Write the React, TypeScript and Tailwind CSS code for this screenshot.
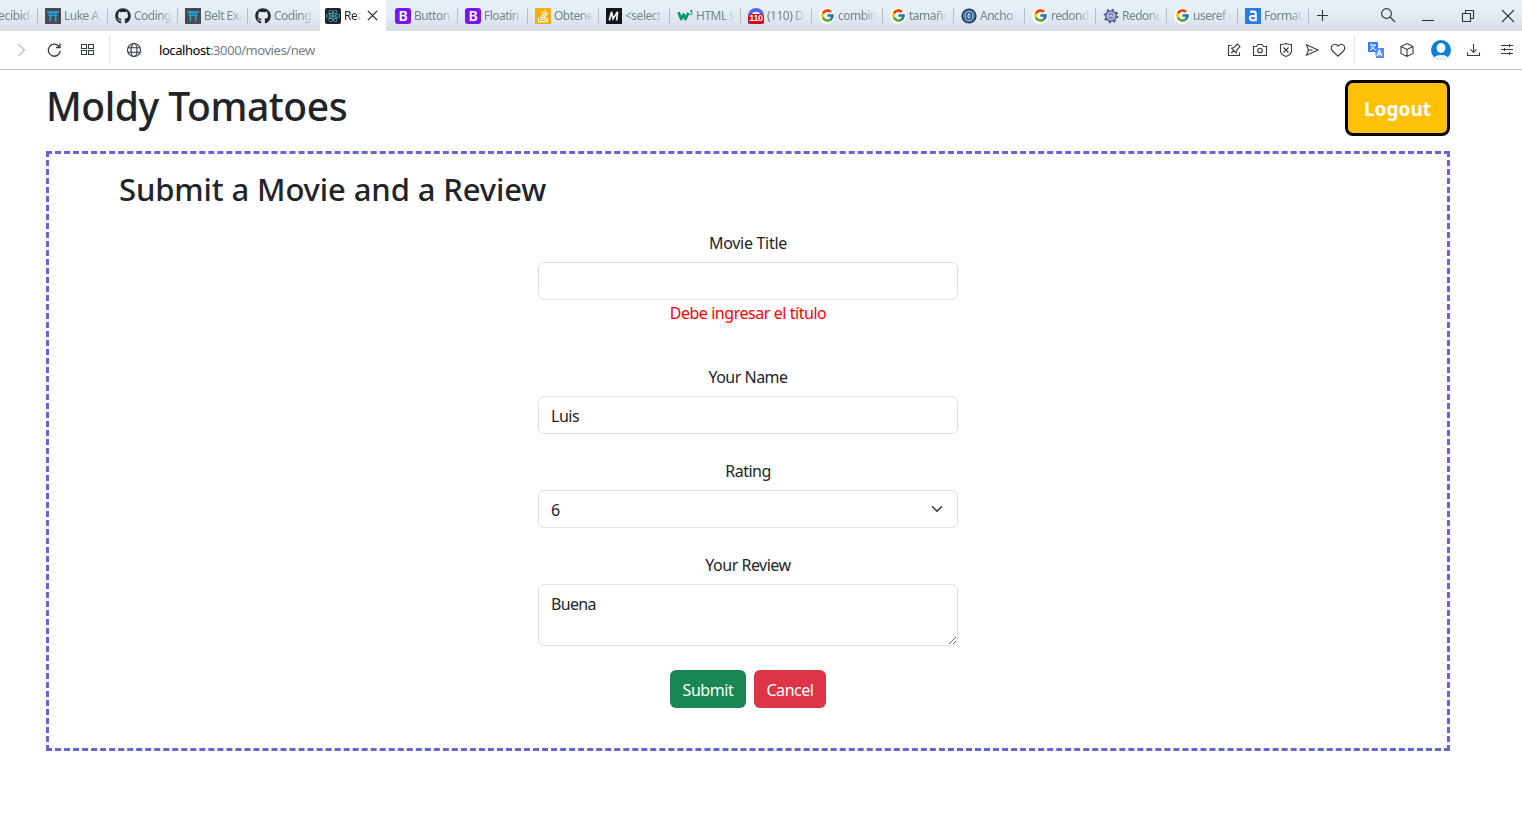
import React from "react";
import { FaGithub, FaReact, FaStackOverflow } from "react-icons/fa";
import { FcGoogle } from "react-icons/fc";

function Stroke({ children, className = "size-4", width = 1.1 }: { children: React.ReactNode; className?: string; width?: number }) {
  return (
    <svg viewBox="0 0 16 16" fill="none" stroke="currentColor" strokeWidth={width} className={`shrink-0 ${className}`}>
      {children}
    </svg>
  );
}

const torii = (
  <svg viewBox="0 0 16 16" className="size-4" fill="none" stroke="#1fa5dc">
    <path d="M0 0h16v16H0z" fill="#4a4a4c" stroke="none" />
    <path d="M2 3.800q6 .6 12 0" strokeWidth="1.800" />
    <path d="M3.500 7.500h9" strokeWidth="1.300" />
    <path d="M5.300 4v9.500M10.700 4v9.500" strokeWidth="1.700" />
    <path d="M8 4v3.500" strokeWidth="1.200" />
  </svg>
);
const github = <FaGithub className="size-4 text-[#24292f]" />;
const bootstrap = (
  <span className="flex size-4 items-center justify-center rounded-[3px] bg-[#7a12f8] text-[14px] leading-none font-semibold text-white">B</span>
);
const google = (
  <span className="flex size-4 items-center justify-center rounded-full bg-white">
    <FcGoogle className="size-[15px]" />
  </span>
);
const stack = (
  <span className="flex size-4 items-center justify-center bg-[#efb010]">
    <FaStackOverflow className="size-3.5 text-white" />
  </span>
);
const medium = (
  <svg viewBox="0 0 16 16" className="size-4" fill="none" stroke="#f4f4f4">
    <path d="M0 0h16v16H0z" fill="#15141a" stroke="none" />
    <path d="M3.300 12.500L5.600 3.800L7 10.800L11.600 3.800L10.600 12.500" strokeWidth="1.700" />
  </svg>
);
const w3 = (
  <svg viewBox="0 0 16 16" className="size-4" fill="none" stroke="#059862">
    <path d="M1.500 4.200L4.300 11L6.600 6.500L8.500 11L11.500 4.800" strokeWidth="2.700" strokeLinejoin="round" />
    <path d="M13 2.600h2.200l-1.300 1.600q1.500 0 1.400 1.300q-.2 1.400-2.300 1" strokeWidth="1" />
  </svg>
);
const discord = (
  <span className="relative block size-4 overflow-hidden rounded-t-full rounded-b-[5px] bg-[#5865f2]">
    <span className="absolute top-[4px] left-[4px] h-[3px] w-2 rounded-t-full bg-white" />
    <span className="absolute inset-x-0 bottom-0 flex h-[10px] items-center justify-center rounded-[4px] bg-[#d90010] font-['Liberation_Sans'] text-[9px] leading-none font-bold tracking-[-0.3px] text-white">
      110
    </span>
  </span>
);
const anchor = (
  <svg viewBox="0 0 16 16" className="size-4" fill="none">
    <circle cx="8" cy="8" r="7.6" fill="#28323e" />
    <circle cx="8" cy="8" r="6.3" fill="#3d77c5" />
    <ellipse cx="8" cy="8" rx="3.700" ry="4.4" fill="#28466c" stroke="#a9c4e6" strokeWidth="1" />
    <path d="M8 5.3q-1.7 0-1.7 2.7t1.7 2.6q1.6 0 1.6-2.6T8 5.3" fill="#e0e9f4" />
    <ellipse cx="8" cy="8" rx=".6" ry="1.3" fill="#28466c" />
  </svg>
);
const gear = (
  <svg viewBox="0 0 16 16" className="size-4" fill="none">
    <circle cx="8" cy="8" r="6.400" stroke="#4755a0" strokeWidth="2" strokeDasharray="2.010 3.016" />
    <circle cx="8" cy="8" r="5.200" fill="#c8cde0" stroke="#3d4b94" strokeWidth="1.3" />
    <circle cx="8" cy="8" r="3.2" fill="#7c86b6" />
    <path d="M5 7.5l2 1.2L8 7l1.2 1.8 2-1.3" stroke="#dce1f0" strokeWidth=".9" />
  </svg>
);
const letterA = (
  <svg viewBox="0 0 16 16" className="size-4" fill="none">
    <path d="M0 0h16v16H0z" fill="#2a7be4" />
    <path d="M5 3.600h3.700q2 0 2 2v6.600H6.800Q5 12.200 5 10.100 5 8 7 8h3.700" stroke="#fff" strokeWidth="2.100" />
  </svg>
);

type Tab = { icon: React.ReactNode; label: string; box: string };
const W70 = "w-[70px] border-r pl-[7px]";
const W71 = "w-[71px] border-r pl-[7px]";

const before: Tab[] = [
  { icon: torii, label: "Luke A", box: W70 },
  { icon: github, label: "Coding", box: W70 },
  { icon: torii, label: "Belt Exa", box: W70 },
  { icon: github, label: "Coding", box: "w-[72px] pl-[7px]" },
];
const after: Tab[] = [
  { icon: bootstrap, label: "Button", box: "w-[72px] border-r pl-[9px]" },
  { icon: bootstrap, label: "Floatin", box: W70 },
  { icon: stack, label: "Obtene", box: W71 },
  { icon: medium, label: "<select", box: W71 },
  { icon: w3, label: "HTML s", box: W71 },
  { icon: discord, label: "(110) D", box: W71 },
  { icon: google, label: "combin", box: W71 },
  { icon: google, label: "tamaño", box: W71 },
  { icon: anchor, label: "Ancho", box: W71 },
  { icon: google, label: "redond", box: W71 },
  { icon: gear, label: "Redond", box: W71 },
  { icon: google, label: "useref e", box: W71 },
  { icon: letterA, label: "Format", box: W71 },
];

const fade = "[mask-image:linear-gradient(to_right,black_68%,transparent)]";

function TabItem({ icon, label, box }: Tab) {
  return (
    <div className={`flex h-4 shrink-0 items-center border-[#b3c0cb] ${box}`}>
      <span className="size-4 shrink-0">{icon}</span>
      <span className={`ml-[3px] w-[39px] overflow-hidden text-[12px] leading-4 tracking-[-0.5px] whitespace-nowrap ${fade}`}>{label}</span>
    </div>
  );
}

function TabBar() {
  return (
    <div className="flex h-[31px] items-center bg-linear-to-b from-[#e6eef6] from-30% to-[#d8dfe7] text-[#75838f]">
      <div className="flex h-4 w-[38px] shrink-0 items-center border-r border-[#b3c0cb]">
        <span className={`-ml-[2px] w-[34px] overflow-hidden text-[12px] leading-4 tracking-[-0.3px] whitespace-nowrap ${fade}`}>ecibidos</span>
      </div>
      {before.map((t, i) => <TabItem key={i} {...t} />)}
      <div className="flex h-full w-[66px] shrink-0 items-center bg-white pl-[5px] text-[#20262c]">
        <span className="flex size-4 items-center justify-center rounded-[2px] bg-[#20232a]">
          <FaReact className="size-3.5 text-[#55bcd6]" />
        </span>
        <span className={`ml-[3px] w-[17px] overflow-hidden text-[12px] leading-4 tracking-[-0.4px] ${fade}`}>React</span>
        <Stroke className="ml-[4px] size-[15px]" width={1.3}><path d="M3 3l10 10M13 3L3 13" /></Stroke>
      </div>
      {after.map((t, i) => <TabItem key={i} {...t} />)}
      <div className="flex flex-1 items-center text-[#2f363d]">
        <Stroke className="ml-[5px] size-4"><path d="M8.500 2v11M3 7.500h11" /></Stroke>
        <Stroke className="ml-[50px] size-4"><circle cx="6.500" cy="5.500" r="4.900" /><path d="M10 9l5 5" /></Stroke>
        <Stroke className="ml-[24px] size-4"><path d="M2 12.500h12" /></Stroke>
        <Stroke className="ml-[24px] size-4"><path d="M2.500 5.500h8v8h-8zM5.500 5.500v-3h8v8h-3" /></Stroke>
        <Stroke className="ml-[24px] size-4"><path d="M2 2l12 12M14 2L2 14" /></Stroke>
      </div>
    </div>
  );
}

function AddressBar() {
  return (
    <div className="flex h-[39px] items-center border-b border-[#b5bfc8] bg-white text-[#343c44]">
      <Stroke className="ml-[13px] size-4 text-[#b8bcc0]"><path d="M5.500 2l6 6-6 6" /></Stroke>
      <Stroke className="ml-[17px] size-4" width={1.3}><path d="M13.300 4.800A6 6 0 1 0 14.300 9M14 1.500v4H10" /></Stroke>
      <Stroke className="ml-[18px] size-4"><path d="M1.500 2.500h5v4h-5zM8.500 2.500h5v4h-5zM1.500 8.500h5v4h-5zM8.500 8.500h5v4h-5z" /></Stroke>
      <div className="ml-[13px] h-7 w-px bg-[#dfe3e7]" />
      <Stroke className="ml-4 size-4" width={1.2}>
        <circle cx="8" cy="8" r="6.500" />
        <ellipse cx="8" cy="8" rx="3" ry="6.500" />
        <path d="M2 5.800h12M2 10.200h12" strokeWidth="1.100" />
      </Stroke>
      <div className="ml-[17px] flex-1 text-[13px] leading-5 tracking-[-0.43px] text-[#71808d]">
        <span className="text-black">localhost</span>:3000/movies/new
      </div>
      <div className="flex items-center gap-[10px]">
        <Stroke><path d="M5.500 3.500h-3v10h11v-3M5.200 11l3-3M5.500 6.200l4.700 4.700.6-2.900L14 4.800 11.300 2 8 5.500z" /></Stroke>
        <Stroke><path d="M1.500 4.500h3l1.500-2h4l1.500 2h3v9h-13z" strokeLinejoin="round" /><circle cx="8" cy="8.500" r="2.300" /></Stroke>
        <Stroke><path d="M8 1.500q2 1 5.500 1V9q0 3.500-5.500 5.500Q2.500 12.500 2.500 9V2.500q3.500 0 5.500-1z" /><path d="M5.500 5.500l5 5M10.500 5.500l-5 5" /></Stroke>
        <Stroke><path d="M2.500 2.800L14 8 2.500 13.200 4.500 8z" /><path d="M4.500 8h4" /></Stroke>
        <Stroke><path d="M8 14.200L2.500 9Q.3 6.300 2 3.700 4.700.8 8 4q3.300-3.200 6-.3 1.700 2.600-.5 5.300z" /></Stroke>
      </div>
      <div className="ml-2 h-7 w-px bg-[#dfe3e7]" />
      <svg viewBox="0 0 16 16" className="ml-[13px] size-4 shrink-0" fill="none" stroke="#fff">
        <path d="M0 0h10v10H0z" fill="#3c7df0" stroke="none" />
        <path d="M6.500 6H16v10H8z" fill="#4f8df7" stroke="none" />
        <path d="M2 3h6M3 1.500l1 1M7 3Q6 6.500 2 8M3 4q1 2.500 4.500 4" />
        <path d="M9 14l2.300-5.500 2.400 5.500M9.800 12.300h3" strokeWidth="1.300" />
      </svg>
      <Stroke className="ml-[15px] size-4"><path d="M8 1.500l6 3v7l-6 3-6-3v-7zM2 4.500l6 3 6-3M8 7.500v7" /></Stroke>
      <svg viewBox="0 0 20 20" className="ml-4 size-5 shrink-0">
        <clipPath id="avatar"><circle cx="10" cy="10" r="10" /></clipPath>
        <g clipPath="url(#avatar)">
          <path d="M0 0h20v20H0z" fill="#0a7fd6" />
          <ellipse cx="10" cy="8" rx="4.400" ry="4.900" fill="#fff" />
          <path d="M2.500 20q0-5 7.500-5t7.500 5z" fill="#eef3fa" />
        </g>
      </svg>
      <Stroke className="ml-[14px] size-4"><path d="M8.500 2v8M5.500 7.300l3 3 3-3M2.500 10.500v3h12v-3" /></Stroke>
      <Stroke className="mr-[7px] ml-[18px] size-4"><path d="M2 3.500h12M2 7.500h12M2 11.500h12M10.500 2v3M5.500 6v3M10.500 10v3" /></Stroke>
    </div>
  );
}

const label = "mb-2 block h-6 pt-px text-center leading-6";
const control = "block w-full rounded-md border border-[#dee2e6] bg-white px-3 leading-6 outline-none";

function MovieForm() {
  return (
    <form className="mx-auto mt-5 w-[420px]">
      <label className={`${label} tracking-[-0.3px]`}>Movie Title</label>
      <input className={`${control} h-[38px]`} />
      <p className="h-6 pt-px text-center leading-6 tracking-[-0.45px] text-[#ff0000]">Debe ingresar el título</p>
      <label className={`${label} mt-10 tracking-[-0.5px]`}>Your Name</label>
      <input className={`${control} h-[38px] pt-px tracking-[-0.45px]`} defaultValue="Luis" />
      <label className={`${label} mt-6 tracking-[-0.5px]`}>Rating</label>
      <div className={`${control} flex h-[38px] items-center justify-between tracking-[-0.45px]`}>
        <span className="pt-px">6</span>
        <svg viewBox="0 0 16 16" className="h-3 w-4" fill="none" stroke="#343a40" strokeWidth="2" strokeLinecap="round" strokeLinejoin="round">
          <path d="m2 5 6 6 6-6" />
        </svg>
      </div>
      <label className={`${label} mt-6 tracking-[-0.5px]`}>Your Review</label>
      <textarea className={`${control} h-[62px] resize-y py-[7px] tracking-[-0.7px]`} defaultValue="Buena" />
      <div className="mt-6 flex justify-center gap-2 text-white">
        <button type="button" className="h-[38px] w-[76px] rounded-md bg-[#198754] pt-px tracking-[-0.4px]">Submit</button>
        <button type="button" className="h-[38px] w-[72px] rounded-md bg-[#dc3545] pt-px tracking-[-0.45px]">Cancel</button>
      </div>
    </form>
  );
}

export default function App() {
  return (
    <div className="h-[814px] w-[1522px] overflow-hidden bg-white font-['Noto_Sans',sans-serif] text-base text-[#212529]">
      <TabBar />
      <AddressBar />
      <main className="pr-[72px] pl-[46px]">
        <header className="flex h-[81px] items-start justify-between pt-[10px]">
          <h1 className="mt-[2px] text-[39px] leading-[48px] font-medium tracking-[-0.45px] whitespace-nowrap">Moldy Tomatoes</h1>
          <button type="button" className="h-14 w-[105px] rounded-lg border-[3px] border-black bg-[#ffc107] pt-0.5 text-[19px] font-bold text-white">Logout</button>
        </header>
        <section className="h-[600px] border-[3px] border-dashed border-[#6666d2] pt-4">
          <h2 className="ml-[70px] h-10 text-[31px] leading-[38px] font-medium tracking-[-0.12px] whitespace-nowrap">Submit a Movie and a Review</h2>
          <MovieForm />
        </section>
      </main>
    </div>
  );
}
